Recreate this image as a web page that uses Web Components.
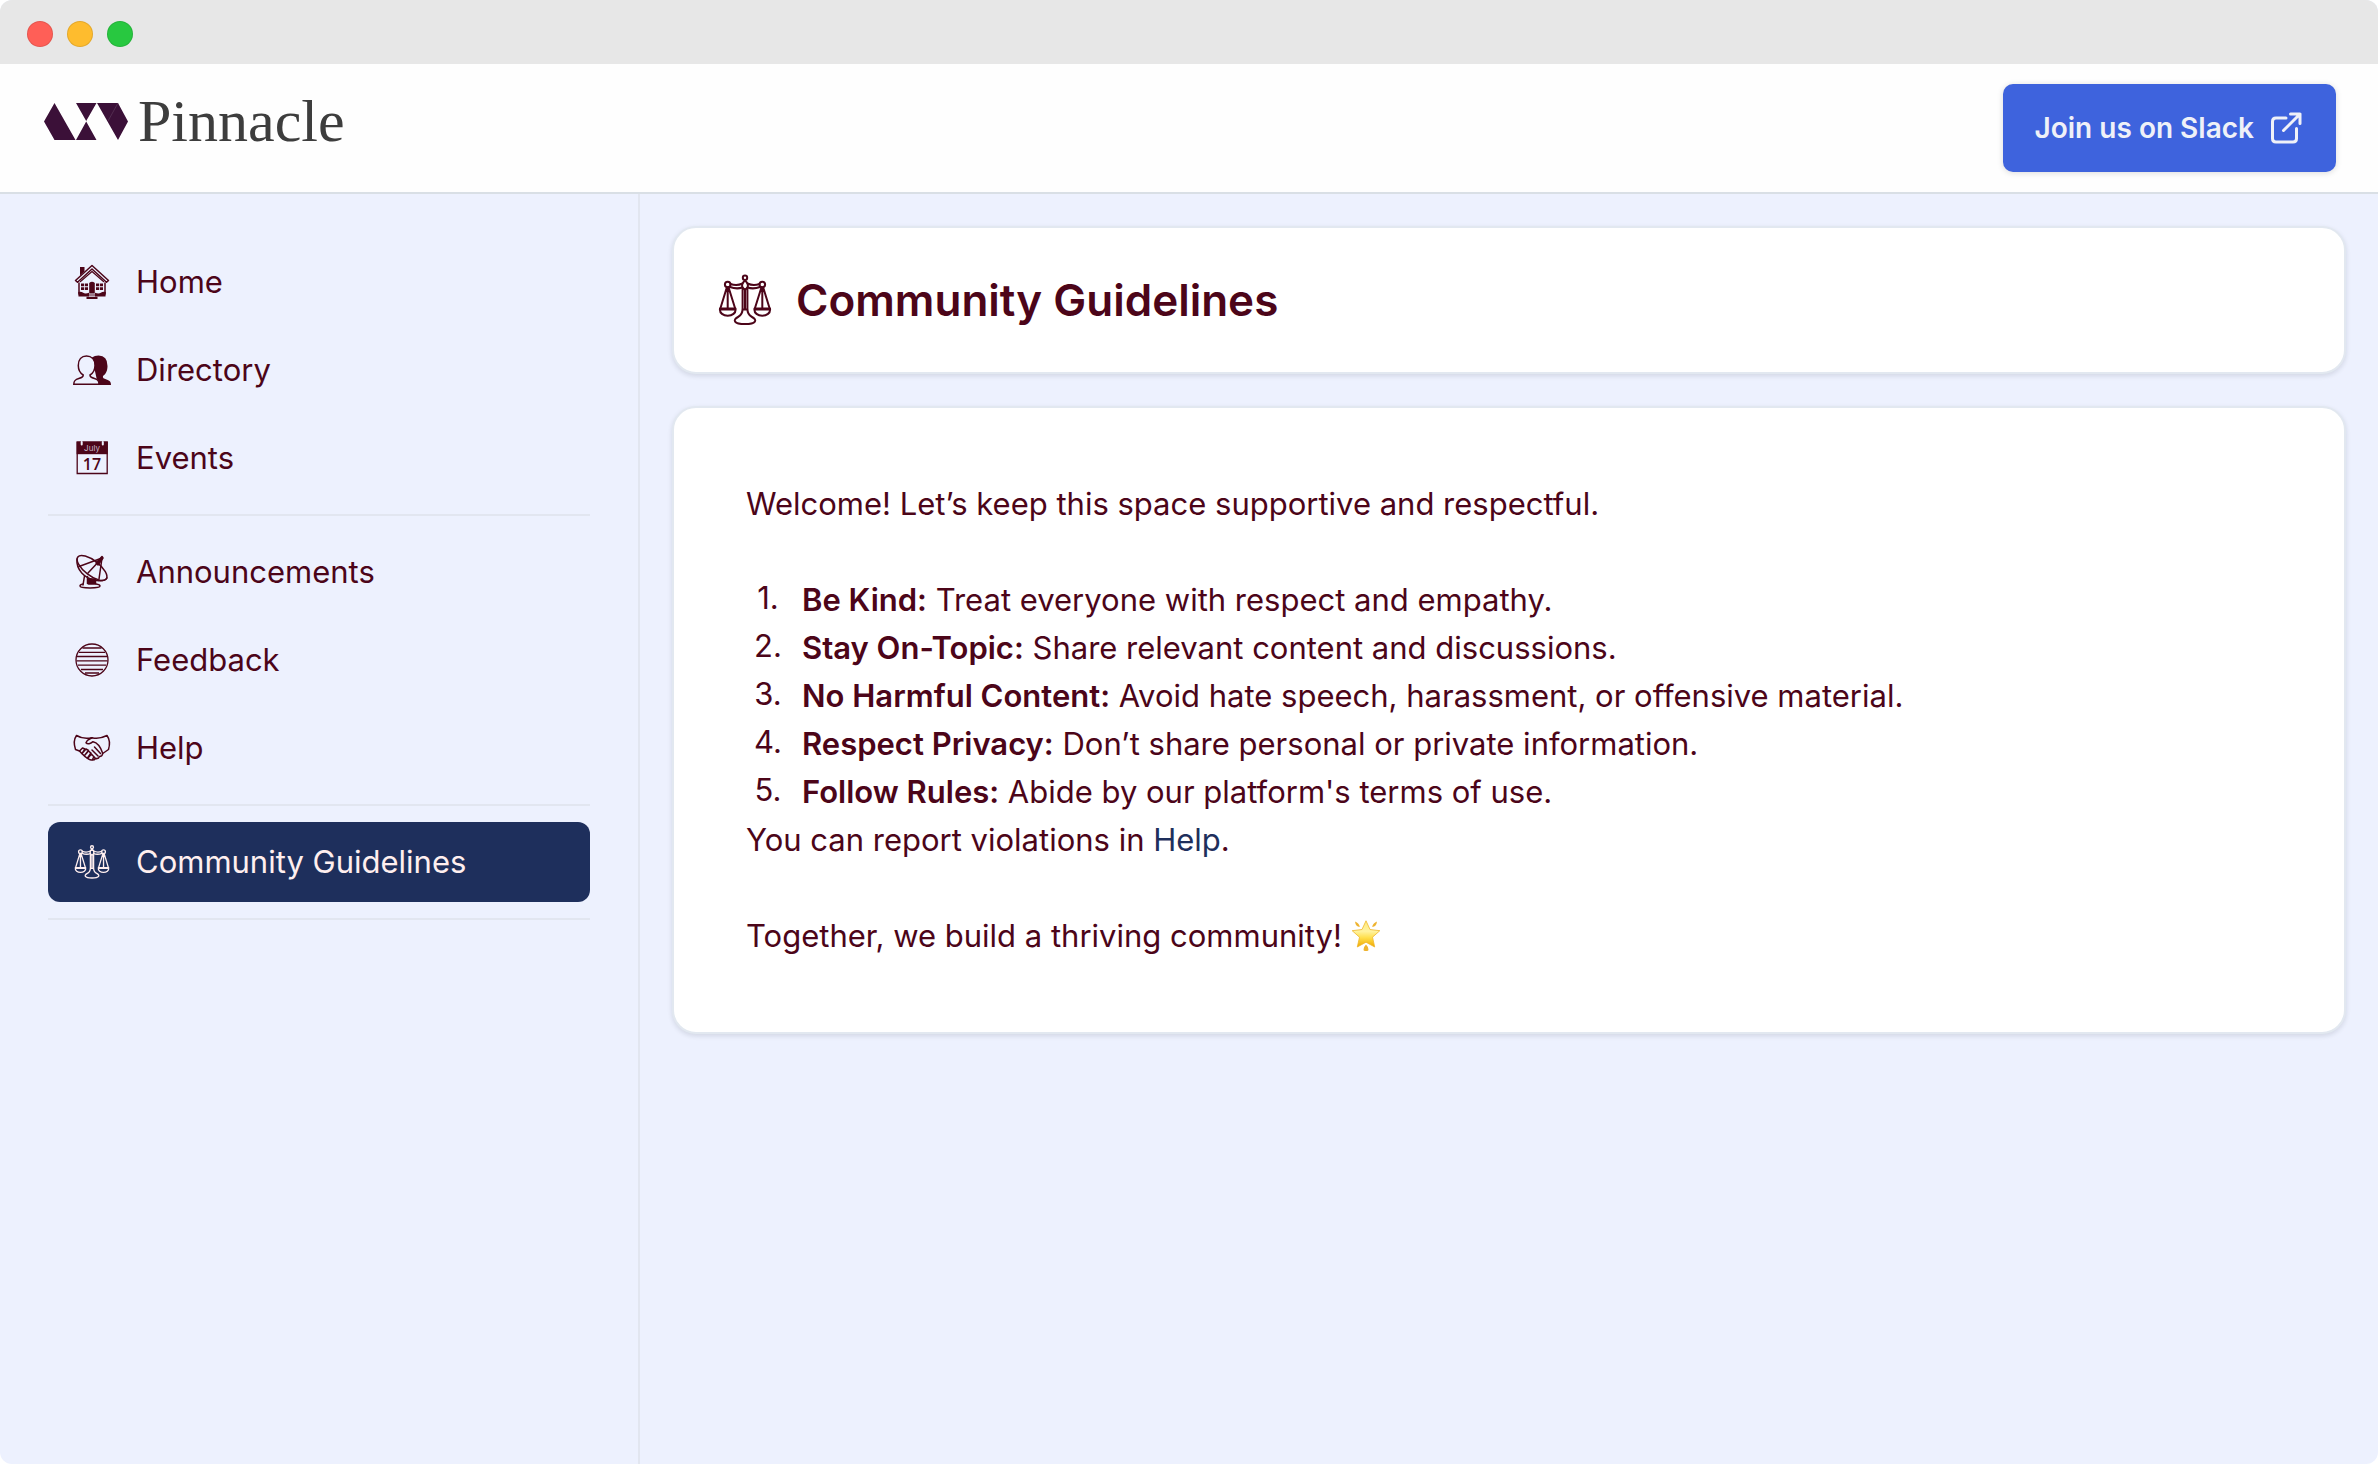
<!DOCTYPE html>
<html lang="en">
<head>
<meta charset="utf-8">
<title>Pinnacle – Community Guidelines</title>
<style>
  html, body { margin: 0; height: 100%; background: #fff; }
  body { font-family: Inter, "Liberation Sans", sans-serif; font-size: 31px; line-height: 48px; color: #4c0519; }
</style>
</head>
<body>
<app-window>
  <site-header slot="header"></site-header>
  <side-nav slot="nav">
    <nav-group>
      <nav-item icon="home">Home</nav-item>
      <nav-item icon="people">Directory</nav-item>
      <nav-item icon="calendar">Events</nav-item>
    </nav-group>
    <nav-group>
      <nav-item icon="dish">Announcements</nav-item>
      <nav-item icon="lines">Feedback</nav-item>
      <nav-item icon="hands">Help</nav-item>
    </nav-group>
    <nav-group>
      <nav-item icon="scales" active>Community Guidelines</nav-item>
    </nav-group>
  </side-nav>
  <page-card><page-title icon="scales">Community Guidelines</page-title></page-card>
  <page-card><guide-article></guide-article></page-card>
</app-window>

<script>
const ICONS = {
  home: `<g fill="none" stroke="currentColor" stroke-width="1.5" stroke-linejoin="round" stroke-linecap="round">
    <path d="M1.500 16.500 18 1.500 34.500 16.500 32.500 18.300 18 5 3.500 18.300Z"/><path d="M5 19v11M31 19v11"/><path d="M6.500 17.500 18 7.500 29.500 17.500" stroke-width="1.200"/></g>
    <g fill="currentColor"><path d="M6 3h4.500v4.500L6 11.500z"/><path d="M15.200 19q2.800-2.600 5.600 0v10.500h-5.600z"/><path d="M4.200 28q3-.8 5 .8t5.800 0V32.500H4.500zM31.800 28q-3-.8-5 .8t-5.800 0V32.500h10.500z"/><path d="M13.500 30.500h9v1h-9zM12.500 32.800h11V35h-11z"/>
    <path d="M7 19.500h3.200v2.800H7zm4 0h3v2.800h-3zM7 23.300h3.200v2.800H7zm4 0h3v2.800h-3zM22 19.500h3v2.800h-3zm3.800 0H29v2.800h-3.200zM22 23.300h3v2.800h-3zm3.800 0H29v2.800h-3.200z"/></g>`,
  people: `<path fill="currentColor" d="M18 5.500q2.500-2 6.500-2 9 0 9 10.500c0 5-2 8.500-4.500 10-.6 2 .8 2.500 3.500 3.500 3.500 1.200 4.500 2.500 4.500 5.500H24z"/>
    <path d="M-.2 32.200c0-3.500 1.300-4.600 5-5.700 3-.9 4.700-1.500 4.400-3.500C6.500 21.300 4.300 18 4.300 13.500 4.300 7.500 7.500 4 12.500 4S21 7.500 21 13.500c0 4.500-2.200 7.800-5 9.500-.3 2 1.500 2.600 4.500 3.500 3.500 1.100 4.500 2.200 4.500 5.700z" fill="#edf1fe" stroke="currentColor" stroke-width="1.500"/>`,
  calendar: `<path fill="none" stroke="currentColor" stroke-width="1.300" d="M3.200 2.200h30v31.300h-30z"/><path fill="currentColor" d="M2.600 1.500h31.200v12.700H2.600z"/>
    <path stroke="#edf1fe" stroke-width="2" stroke-linecap="round" d="M7.700 2v2.600M28.800 2v2.600"/>
    <text x="18" y="11" text-anchor="middle" font-size="8" fill="#c9b9c9" font-family="Inter,sans-serif">July</text>
    <text x="18" y="29.500" text-anchor="middle" font-size="16" font-weight="600" fill="currentColor" font-family="'Open Sans',sans-serif">17</text>`,
  dish: `<g fill="none" stroke="currentColor" stroke-width="1.500" stroke-linejoin="round" stroke-linecap="round">
    <ellipse cx="18" cy="14" rx="18" ry="7.500" transform="rotate(38 18 14)"/><path d="M3 5c-1 10 7 20 20 21.500 5 .5 9-.5 10-2.500"/>
    <path d="M28 4 5 12.500M28 4 25 25M28 4 14 19"/><path d="M22 9l6-6.500 1 1.500-5 7z" fill="currentColor"/>
    <path d="M10.500 22 9 31M13.500 22.500v7"/><path d="M14.500 25h7v5h-7z" fill="currentColor"/><path d="M9 30q-3 .5-3 2c0 2.500 20 2.500 20 0q0-1.500-4-2"/></g>`,
  lines: `<g fill="none" stroke="currentColor" stroke-width="1.300"><circle cx="18" cy="18" r="16"/><path d="M8.500 6h19M5 10.300h26M3 14.500h30M2.500 18.800h31M4 23.200h28M7 27.500h22M11 31h14"/></g>`,
  hands: `<g fill="none" stroke="currentColor" stroke-width="1.500" stroke-linejoin="round" stroke-linecap="round">
    <path d="M2.500 5.500C0 9 0 15 1.500 19.500l4 1.500c3 3.500 6 6.500 10 8.500 3 1 5 .5 6-1 2.500.5 3.500-.5 4-2 2 0 3-1.200 3.200-3l5.800-4c1.500-5 1-10.500-1.500-14-5 2.500-10 3.500-15 2.200C12 9 6.500 8 2.500 5.500z"/>
    <path d="M18 7.700c-3 1.200-5 2.800-6 5 1.500 2 4.500 1 7-1 4 .8 7.500 5 9.700 11.500M5.500 21l3-3 2.500 1-3 4.500M8 23.500l4-4.500 2.500 1.500-4 5M10.500 25.500l4-4.500 2.500 2-3.500 5M14 28l3-3.500 3 2-1.500 3M18 20l6 6M20.500 17l6 6.500M16 22.500l5 5.500"/></g>`,
  scales: `<g transform="scale(.6667)" fill="none" stroke="currentColor" stroke-width="2" stroke-linejoin="round" stroke-linecap="round">
    <circle cx="27" cy="4.800" r="2.200"/><path d="M27 7.500c-2.500 2-3.500 4.500-2.500 7L27 17l2.500-2.500c1-2.500 0-5-2.500-7z"/>
    <path d="M24.500 10.500c-4 2-8 2-12 .5M24.500 14.500c-4.500 1.500-8.500 1-12.500-.5M29.500 10.500c4 2 8 2 12 .5M29.500 14.500c4.500 1.500 8.500 1 12.500-.5"/>
    <circle cx="9.700" cy="11.500" r="2.800"/><circle cx="44.300" cy="11.500" r="2.800"/>
    <path d="M8.800 14.500 2.500 35M9.700 14.500V35M10.600 14.500 17 35M43.400 14.500 37 35M44.300 14.500V35M45.200 14.500 51.500 35"/>
    <path d="M2 35.500h15.500c1.500 9.500-17 9.500-15.500 0zM36.500 35.500H52c1.500 9.500-17 9.500-15.500 0z"/>
    <path d="M2 36h15.500v1.500H2zM36.500 36H52v1.500H36.500z" fill="currentColor" stroke="none"/>
    <path d="M24.600 16v19.500c0 4.500-1.600 7-4.600 8.500-5.500 2.800-4.500 7 7 7s12.500-4.200 7-7c-3-1.500-4.600-4-4.600-8.500V16M27 17.500V36M24.600 36.500h4.800"/></g>`
};
const icon = (name, size) => `<svg width="${size}" height="${size}" viewBox="0 0 36 36" overflow="visible" aria-hidden="true">${ICONS[name]}</svg>`;

class Base extends HTMLElement {
  connectedCallback() {
    if (!this.shadowRoot) this.attachShadow({ mode: 'open' }).innerHTML = this.view();
  }
}

customElements.define('app-window', class extends Base {
  view() { return `<style>
    :host { display: flex; flex-direction: column; min-height: 100vh; border-radius: 12px; overflow: hidden; background: #edf1fe; }
    .bar { display: flex; align-items: center; gap: 14px; height: 64px; padding: 4px 27px 0; box-sizing: border-box; background: #e7e7e7; }
    .bar i { width: 26px; height: 26px; border-radius: 50%; box-sizing: border-box; border: 1px solid rgba(0,0,0,.1); }
    .body { flex: 1; display: flex; }
    main { flex: 1; min-width: 0; display: flex; flex-direction: column; gap: 32px; padding: 32px; }
    </style>
    <div class="bar"><i style="background:#ff5f57"></i><i style="background:#febc2e"></i><i style="background:#28c840"></i></div>
    <slot name="header"></slot>
    <div class="body"><slot name="nav"></slot><main><slot></slot></main></div>`; }
});

customElements.define('site-header', class extends Base {
  view() { return `<style>
    :host { display: flex; justify-content: space-between; align-items: center; height: 128px; padding: 0 42px 0 44px; background: #fefefe; border-bottom: 2px solid #d9dfe5; }
    .logo { display: flex; align-items: center; gap: 10px; padding-bottom: 14px; color: #3d3d3d; font: 60px/64px "Liberation Serif", serif; text-decoration: none; }
    button { display: flex; align-items: center; gap: 14px; height: 88px; padding: 0 34px 0 32px; border: 0; border-radius: 10px; background: #3e63dd; color: #eff1f8; font: 600 28px/40px Inter, sans-serif; box-shadow: 0 1px 6px rgba(0,0,0,.14); }
    </style>
    <a class="logo" href="#"><svg width="84" height="37" viewBox="0 0 84 37" fill="#3b1038" aria-hidden="true"><path d="M10.500 0 31.500 37h-21L0 18.500zM32 0h20.500L42.200 18zM42.200 18.500 52.500 37H32zM53 0h21l10 18.500L74 37z"/><path d="M64 18 74 0" stroke="#6b4a69" stroke-width=".5"/></svg><span>Pinnacle</span></a>
    <button type="button">Join us on Slack<svg width="34" height="34" viewBox="0 0 34 34" fill="none" stroke="currentColor" stroke-width="3" stroke-linecap="round" stroke-linejoin="round" aria-hidden="true"><path d="M18 7H8q-3.500 0-3.500 3.500v17Q4.500 31 8 31h17q3.500 0 3.500-3.500v-10"/><path d="M15.500 19.500 32 3M22.500 3H32v9.500"/></svg></button>`; }
});

customElements.define('side-nav', class extends Base {
  view() { return `<style>
    :host { display: block; width: 638px; box-sizing: content-box; border-right: 2px solid #e2e6f0; }
    nav { display: flex; flex-direction: column; gap: 16px; padding: 48px; }
    </style><nav aria-label="Main"><slot></slot></nav>`; }
});

customElements.define('nav-group', class extends Base {
  view() { return `<style>
    :host { display: flex; flex-direction: column; gap: 8px; padding-bottom: 16px; border-bottom: 2px solid #e2e6f0; }
    </style><slot></slot>`; }
});

customElements.define('nav-item', class extends Base {
  view() { return `<style>
    :host { display: block; }
    a { display: flex; align-items: center; gap: 26px; height: 80px; padding: 0 26px; border-radius: 12px; color: inherit; text-decoration: none; }
    :host([active]) a { background: #1e2f5c; color: #ffefef; }
    svg { flex: none; }
    </style><a href="#">${icon(this.getAttribute('icon'), 36)}<span><slot></slot></span></a>`; }
});

customElements.define('page-card', class extends Base {
  view() { return `<style>
    :host { display: block; background: #fff; border: 2px solid #e2e8f0; border-radius: 24px; box-shadow: 0 2px 5px rgba(15,23,42,.12); }
    </style><slot></slot>`; }
});

customElements.define('page-title', class extends Base {
  view() { return `<style>
    :host { display: flex; align-items: center; gap: 24px; padding: 40px 44px; }
    h1 { margin: 0; font-size: 44px; line-height: 64px; font-weight: 600; }
    svg { flex: none; }
    </style>${icon(this.getAttribute('icon'), 54)}<h1><slot></slot></h1>`; }
});

customElements.define('guide-rule', class extends Base {
  view() { return `<style>
    :host { display: grid; grid-template-columns: 44px 1fr; column-gap: 12px; }
    .n { text-align: center; line-height: 44px; }
    strong { font-weight: 600; }
    </style><span class="n">${this.getAttribute('n')}.</span><span><strong>${this.getAttribute('name')}:</strong> <slot></slot></span>`; }
});

customElements.define('guide-article', class extends Base {
  view() { return `<style>
    :host { display: flex; flex-direction: column; padding: 72px; }
    p { margin: 0; }
    ol { list-style: none; margin: 48px 0 0; padding: 0; }
    .last { margin-top: 48px; }
    a { color: #1e2f5c; text-decoration: none; }
    svg { vertical-align: -4px; }
    </style>
    <p>Welcome! Let’s keep this space supportive and respectful.</p>
    <ol>
      <li><guide-rule n="1" name="Be Kind">Treat everyone with respect and empathy.</guide-rule></li>
      <li><guide-rule n="2" name="Stay On-Topic">Share relevant content and discussions.</guide-rule></li>
      <li><guide-rule n="3" name="No Harmful Content">Avoid hate speech, harassment, or offensive material.</guide-rule></li>
      <li><guide-rule n="4" name="Respect Privacy">Don’t share personal or private information.</guide-rule></li>
      <li><guide-rule n="5" name="Follow Rules">Abide by our platform's terms of use.</guide-rule></li>
    </ol>
    <p>You can report violations in <a href="#">Help</a>.</p>
    <p class="last">Together, we build a thriving community! <svg width="30" height="31" viewBox="0 0 30 31" role="img" aria-label="Glowing star">
      <defs><linearGradient id="g" x1="0" y1="0" x2="0" y2="1"><stop offset="0" stop-color="#ffe97a"/><stop offset=".4" stop-color="#fff3a0"/><stop offset=".65" stop-color="#ffdf4a"/><stop offset="1" stop-color="#f0a800"/></linearGradient></defs>
      <path fill="url(#g)" stroke="#efb62c" stroke-width=".8" stroke-linejoin="round" d="M15 .8l4 8.700 9.800 1.200-7.300 6.500 2.200 9.800-8.700-4.800L6.300 27l2.200-9.800L1.200 10.700 11 9.500z"/>
      <path fill="#eeb32f" d="M4 1.500q4.300 1.500 4.800 5.500Q4.500 6.500 4 1.500zM26 1.500q-4.300 1.500-4.800 5.500 4.300-.5 4.800-5.500zM15 24.500q3 3 2.300 6-2.300 1-4.600 0-.7-3 2.300-6z"/></svg></p>`; }
});
</script>
</body>
</html>
